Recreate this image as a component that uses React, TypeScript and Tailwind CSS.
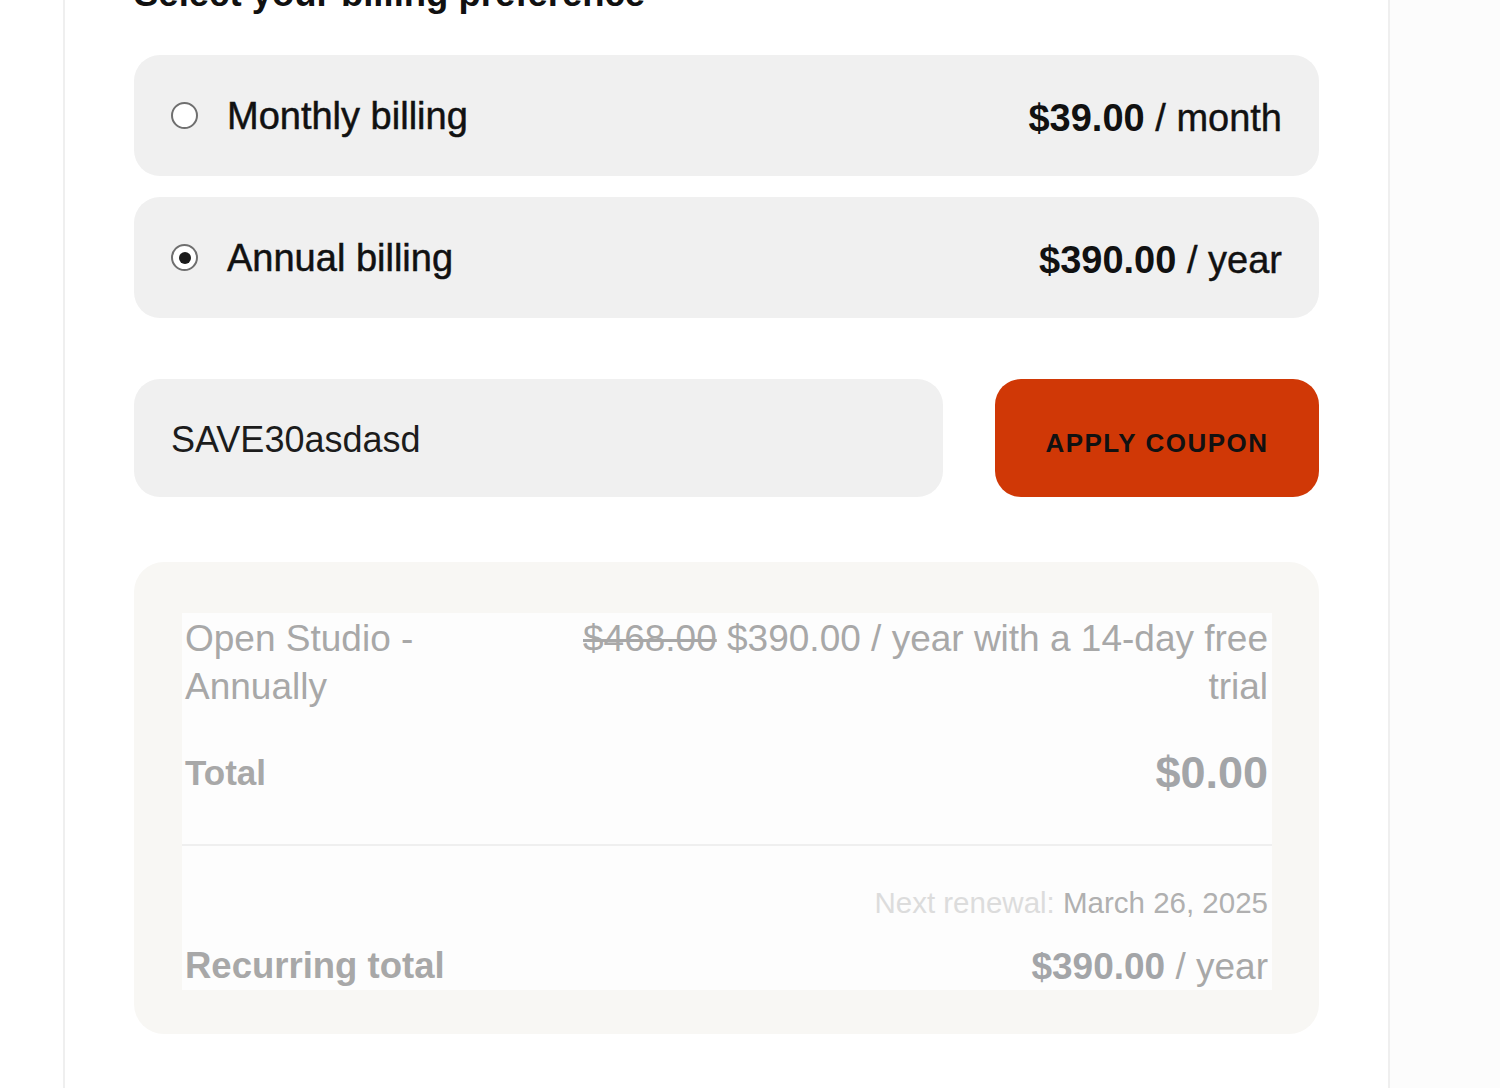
import React from "react";

function Radio({ checked }: { checked: boolean }) {
  return (
    <span className="flex h-[27px] w-[27px] shrink-0 items-center justify-center rounded-full border-[2px] border-[#6f6f6f] bg-white">
      {checked ? <span className="h-[12px] w-[12px] rounded-full bg-[#1a1a1a]" /> : null}
    </span>
  );
}

function BillingCard({
  label,
  price,
  unit,
  checked,
}: {
  label: string;
  price: string;
  unit: string;
  checked: boolean;
}) {
  return (
    <div className="flex h-[121px] items-center justify-between rounded-[26px] bg-[#f0f0f0] pl-[37px] pr-[37px]">
      <div className="flex items-center gap-[29px]">
        <Radio checked={checked} />
        <span className="text-[38px] leading-none text-[#111] [-webkit-text-stroke:0.5px_#111]">{label}</span>
      </div>
      <div className="mt-[5px] text-[38px] leading-none text-[#111]">
        <span className="font-bold">{price}</span>
        <span className="[-webkit-text-stroke:0.4px_#111]"> / {unit}</span>
      </div>
    </div>
  );
}

export default function App() {
  return (
    <div
      className="flex min-h-[1088px] w-[1500px] overflow-hidden bg-[#fcfcfc]"
      style={{ fontFamily: '"Liberation Sans", Arial, sans-serif' }}
    >
      <div className="w-[63px] shrink-0 bg-white" />
      <div className="w-[1327px] shrink-0 border-x-[2px] border-[#efefef] bg-white pl-[69px] pr-[69px]">
        <h2 className="mt-[-24px] text-[36.5px] font-bold leading-[36px] text-[#111]">
          Select your billing preference
        </h2>

        <div className="mt-[43px] flex w-[1185px] flex-col gap-[21px]">
          <BillingCard label="Monthly billing" price="$39.00" unit="month" checked={false} />
          <BillingCard label="Annual billing" price="$390.00" unit="year" checked={true} />
        </div>

        <div className="mt-[61px] flex w-[1185px] items-stretch justify-between">
          <div className="flex h-[118px] w-[809px] items-center rounded-[26px] bg-[#f0f0f0] pl-[37px]">
            <span className="mt-[4px] text-[36px] leading-none text-[#1c1c1c]">SAVE30asdasd</span>
          </div>
          <button className="flex h-[118px] w-[324px] items-center justify-center rounded-[26px] bg-[#d03806]">
            <span className="mt-[9px] text-[26px] font-bold leading-none tracking-[1.5px] text-[#111]">
              APPLY COUPON
            </span>
          </button>
        </div>

        <div className="mt-[65px] w-[1185px] rounded-[30px] bg-[#f8f7f4] pb-[44px] pl-[48px] pr-[47px] pt-[51px]">
          <div className="bg-[#fdfdfd] pl-[3px] pr-[4px] pt-[2px] text-[#a8a8a8]">
            <div className="grid grid-cols-[370px_1fr] text-[37px] leading-[48px]">
              <div>Open Studio - Annually</div>
              <div className="text-right">
                <span className="line-through decoration-[#a8a8a8] decoration-[3px]">$468.00</span> $390.00 / year with a 14-day free trial
              </div>
            </div>

            <div className="mt-[37px] flex h-[48px] items-center justify-between">
              <span className="text-[35px] font-bold leading-none">Total</span>
              <span className="text-[45px] font-bold leading-none text-[#a3a5a8]">$0.00</span>
            </div>

            <div className="ml-[-3px] mr-[-4px] mt-[48px] h-[2px] bg-[#efefef]" />

            <div className="mt-[37px] h-[40px] text-right text-[29.5px] leading-[40px]">
              <span className="text-[#dcdcdc]">Next renewal: </span>
              <span className="text-[#b0b0b0]">March 26, 2025</span>
            </div>

            <div className="mt-[19px] flex h-[48px] items-center justify-between">
              <span className="text-[36.5px] font-bold leading-none">Recurring total</span>
              <span className="text-[37px] leading-none">
                <span className="font-bold text-[#a3a5a8]">$390.00</span>
                <span> / year</span>
              </span>
            </div>
          </div>
        </div>
      </div>
    </div>
  );
}
